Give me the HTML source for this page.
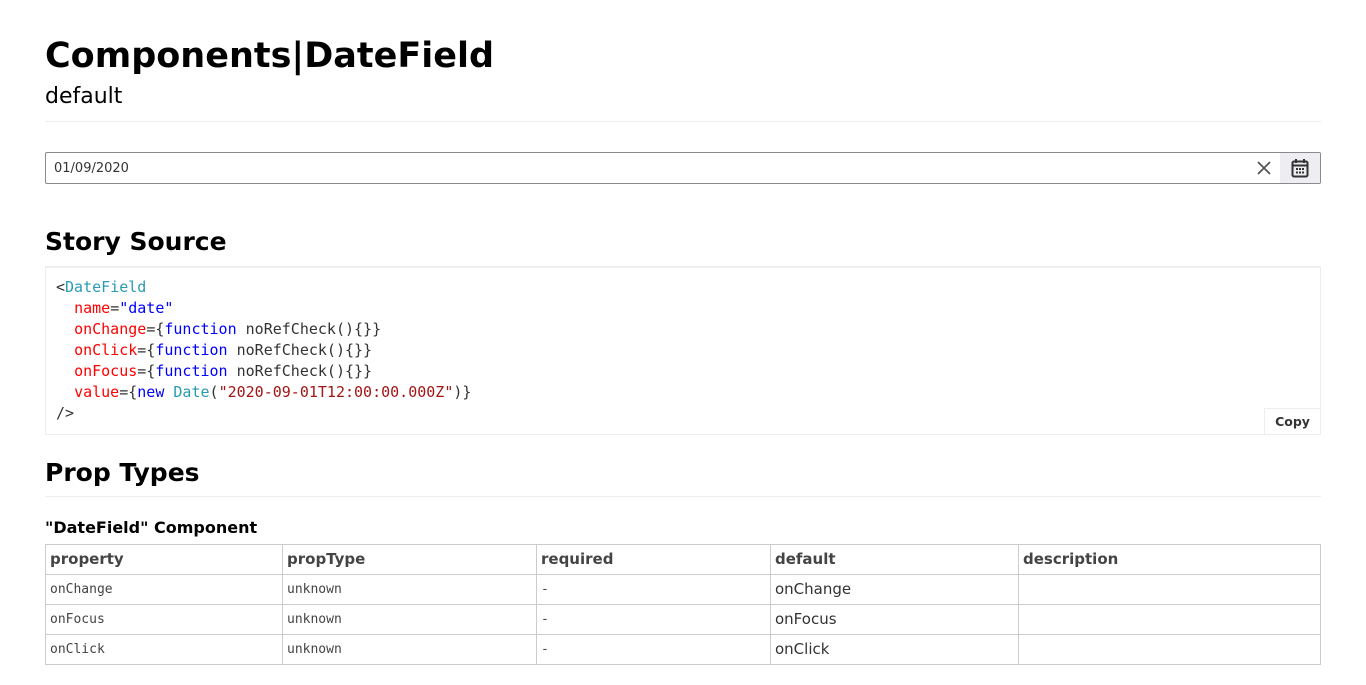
<!DOCTYPE html>
<html><head><meta charset="utf-8"><style>
*{margin:0;padding:0;box-sizing:border-box}
body{width:1366px;height:685px;background:#fff;font-family:"DejaVu Sans","Liberation Sans",sans-serif;color:#000;position:relative;overflow:hidden}
.a{position:absolute}
h1{position:absolute;left:45px;top:34px;font-size:35px;font-weight:bold;line-height:44px;white-space:nowrap}
.sub{left:45px;top:83px;font-size:22px;line-height:28px}
.hr{left:45px;width:1276px;height:1px;background:#eee}
.input{left:45px;top:152px;width:1276px;height:32px;border:1px solid #8a8a8a;border-radius:2px}
.h2{left:45px;font-size:25px;font-weight:bold;line-height:32px}
.code{left:45px;top:266px;width:1276px;height:169px;border:1px solid #eee;border-top:2px solid #eee;font-family:"DejaVu Sans Mono",monospace;font-size:15px;line-height:21px;color:#333;padding:9px 0 0 10px;white-space:pre}
.r{color:#f00}.b{color:#00f}.t{color:#2a9bb3}.s{color:#a31515}
.copy{right:0;bottom:0;width:56px;height:26px;border:1px solid #eee;border-right:0;border-bottom:0;font-size:12.5px;font-weight:bold;color:#333;text-align:center;line-height:26px;background:#fff}
table{position:absolute;left:45px;top:544px;width:1276px;border-collapse:collapse}
td,th{border:1px solid #ccc;height:30px;padding:0 4px;text-align:left;vertical-align:middle}
th{font-size:15px;font-weight:bold;color:#444;padding-bottom:2px}
td{font-family:"DejaVu Sans Mono",monospace;font-size:13px;color:#444}
td.d{font-family:"DejaVu Sans",sans-serif;font-size:15px;color:#333;padding-bottom:2px}
</style></head><body>
<h1>Components|DateField</h1>
<div class="a sub">default</div>
<div class="a hr" style="top:121px"></div>
<div class="a input">
<span class="a" style="left:8px;top:8px;font-size:13px;color:#333">01/09/2020</span>
<svg class="a" style="left:1211px;top:8px" width="14" height="14" viewBox="0 0 14 14"><path d="M1 1L13 13M13 1L1 13" stroke="#555" stroke-width="1.8"/></svg>
<div class="a" style="left:1234px;top:0;width:40px;height:30px;background:#eeeef2"></div>
<svg class="a" style="left:1245px;top:5px" width="18" height="20" viewBox="0 0 18 20"><rect x="1.5" y="3.5" width="15" height="15" rx="1.5" fill="none" stroke="#333" stroke-width="2"/><path d="M5 1v4M13 1v4M2 7.5h14" stroke="#333" stroke-width="2"/><rect x="5" y="10" width="2" height="2" fill="#333"/><rect x="8" y="10" width="2" height="2" fill="#333"/><rect x="11" y="10" width="2" height="2" fill="#333"/><rect x="5" y="13.5" width="2" height="2" fill="#333"/><rect x="8" y="13.5" width="2" height="2" fill="#333"/><rect x="11" y="13.5" width="2" height="2" fill="#333"/></svg>
</div>
<div class="a h2" style="top:226px">Story Source</div>
<div class="a code">&lt;<span class="t">DateField</span>
  <span class="r">name</span>=<span class="b">"date"</span>
  <span class="r">onChange</span>={<span class="b">function</span> noRefCheck(){}}
  <span class="r">onClick</span>={<span class="b">function</span> noRefCheck(){}}
  <span class="r">onFocus</span>={<span class="b">function</span> noRefCheck(){}}
  <span class="r">value</span>={<span class="b">new</span> <span class="t">Date</span>(<span class="s">"2020-09-01T12:00:00.000Z"</span>)}
/&gt;<div class="a copy" style="font-family:'DejaVu Sans',sans-serif">Copy</div></div>
<div class="a h2" style="top:457px">Prop Types</div>
<div class="a hr" style="top:496px"></div>
<div class="a" style="left:45px;top:518px;font-size:16px;font-weight:bold;line-height:20px">"DateField" Component</div>
<table>
<tr><th style="width:237px">property</th><th style="width:254px">propType</th><th style="width:234px">required</th><th style="width:248px">default</th><th>description</th></tr>
<tr><td>onChange</td><td>unknown</td><td>-</td><td class="d">onChange</td><td></td></tr>
<tr><td>onFocus</td><td>unknown</td><td>-</td><td class="d">onFocus</td><td></td></tr>
<tr><td>onClick</td><td>unknown</td><td>-</td><td class="d">onClick</td><td></td></tr>
</table>
</body></html>
